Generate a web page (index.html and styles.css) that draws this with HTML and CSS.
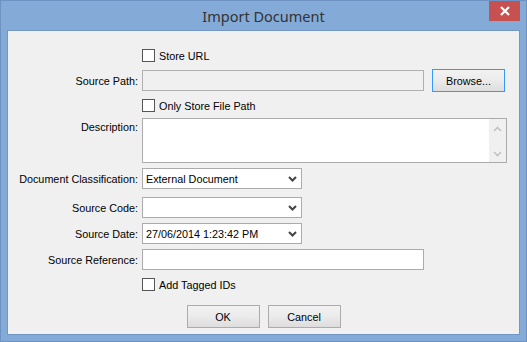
FILE: index.html
```html
<!DOCTYPE html>
<html>
<head>
<meta charset="utf-8">
<link rel="stylesheet" href="styles.css">
</head>
<body>
<div class="window">
  <div class="titlebar">
    <div></div>
    <div class="title">Import Document</div>
    <div class="close"><svg width="10" height="10" viewBox="0 0 10 10"><path d="M1 1 L9 9 M9 1 L1 9" stroke="#fff" stroke-width="2.2" fill="none"/></svg></div>
  </div>
  <div class="panel">
    <div class="form">
      <div class="row r-check1"><div></div><label class="check"><span class="box"></span>Store URL</label></div>
      <div class="row r-path"><div class="lbl">Source Path:</div><div class="pathline"><div class="field disabled wide"></div><div class="btn focused">Browse...</div></div></div>
      <div class="row r-check2"><div></div><label class="check"><span class="box"></span>Only Store File Path</label></div>
      <div class="row r-desc"><div class="lbl top">Description:</div><div class="textarea"><div class="vscroll"><svg width="9" height="6" viewBox="0 0 9 6"><path d="M1 5 L4.5 1.5 L8 5" stroke="#c2c2c2" stroke-width="1.6" fill="none"/></svg><svg width="9" height="6" viewBox="0 0 9 6"><path d="M1 1 L4.5 4.5 L8 1" stroke="#c2c2c2" stroke-width="1.6" fill="none"/></svg></div></div></div>
      <div class="row r-class"><div class="lbl">Document Classification:</div><div class="combo"><span>External Document</span><svg width="9" height="6" viewBox="0 0 9 6"><path d="M1 1 L4.5 4.5 L8 1" stroke="#444" stroke-width="2" fill="none"/></svg></div></div>
      <div class="row r-code"><div class="lbl">Source Code:</div><div class="combo"><span></span><svg width="9" height="6" viewBox="0 0 9 6"><path d="M1 1 L4.5 4.5 L8 1" stroke="#444" stroke-width="2" fill="none"/></svg></div></div>
      <div class="row r-date"><div class="lbl">Source Date:</div><div class="combo"><span>27/06/2014 1:23:42 PM</span><svg width="9" height="6" viewBox="0 0 9 6"><path d="M1 1 L4.5 4.5 L8 1" stroke="#444" stroke-width="2" fill="none"/></svg></div></div>
      <div class="row r-ref"><div class="lbl">Source Reference:</div><div class="field wide"></div></div>
      <div class="row r-check3"><div></div><label class="check"><span class="box"></span>Add Tagged IDs</label></div>
      <div class="buttons"><div class="btn">OK</div><div class="btn">Cancel</div></div>
    </div>
  </div>
</div>
</body>
</html>
```
FILE: styles.css
```css
html, body { margin: 0; padding: 0; }
body { width: 527px; height: 342px; overflow: hidden; font-family: "Liberation Sans", Arial, sans-serif; font-size: 10.8px; color: #000; }
.window { width: 527px; height: 342px; box-sizing: border-box; border: 1px solid #6e93c3; background: #84aad8; display: flex; flex-direction: column; }
.titlebar { height: 29px; display: grid; grid-template-columns: 1fr auto 1fr; padding: 0 6px; }
.title { font-family: "Noto Sans", "Open Sans", sans-serif; font-size: 14.5px; color: #333; align-self: center; padding-top: 1px; }
.close { justify-self: end; width: 31px; height: 20px; background: #c75050; display: flex; align-items: center; justify-content: center; }
.panel { flex: 1; margin: 0 6px 6px 6px; background: #f0f0f0; border: 1px solid #7296c5; }
.form { display: flex; flex-direction: column; padding-top: 18px; }
.row { display: grid; grid-template-columns: 130px 1fr; column-gap: 4px; align-items: center; }
.lbl { text-align: right; white-space: nowrap; }
.lbl.top { align-self: start; padding-top: 3px; }
.check { display: flex; align-items: center; height: 13px; gap: 4px; }
.box { width: 13px; height: 13px; box-sizing: border-box; border: 1px solid #555; background: #fff; flex: none; }
.r-path { margin-top: 7px; height: 23px; }
.r-check2 { margin-top: 7px; }
.r-desc { margin-top: 6px; }
.r-class { margin-top: 5px; }
.r-code { margin-top: 8px; }
.r-date { margin-top: 5px; }
.r-ref { margin-top: 5px; }
.r-check3 { margin-top: 8px; }
.pathline { display: flex; align-items: center; gap: 8px; }
.field { height: 21px; box-sizing: border-box; border: 1px solid #ababab; background: #fff; }
.field.wide { width: 282px; }
.field.disabled { background: #f0f0f0; border-color: #b0b0b0; }
.btn { width: 73px; height: 23px; box-sizing: border-box; border: 1px solid #acacac; background: linear-gradient(#f2f2f2 0%, #ebebeb 50%, #dddddd 100%); display: flex; align-items: center; justify-content: center; }
.btn.focused { border-color: #3399ff; }
.textarea { width: 365px; height: 45px; box-sizing: border-box; border: 1px solid #ababab; background: #fff; display: flex; justify-content: flex-end; }
.vscroll { width: 17px; background: #f0f0f0; display: flex; flex-direction: column; justify-content: space-between; align-items: center; padding: 7px 0 5px; box-sizing: border-box; }
.combo { width: 160px; height: 21px; box-sizing: border-box; border: 1px solid #ababab; background: #fff; display: flex; align-items: center; justify-content: space-between; padding: 0 4px 0 3px; }
.buttons { display: flex; justify-content: center; gap: 8px; margin-top: 14px; }
```
